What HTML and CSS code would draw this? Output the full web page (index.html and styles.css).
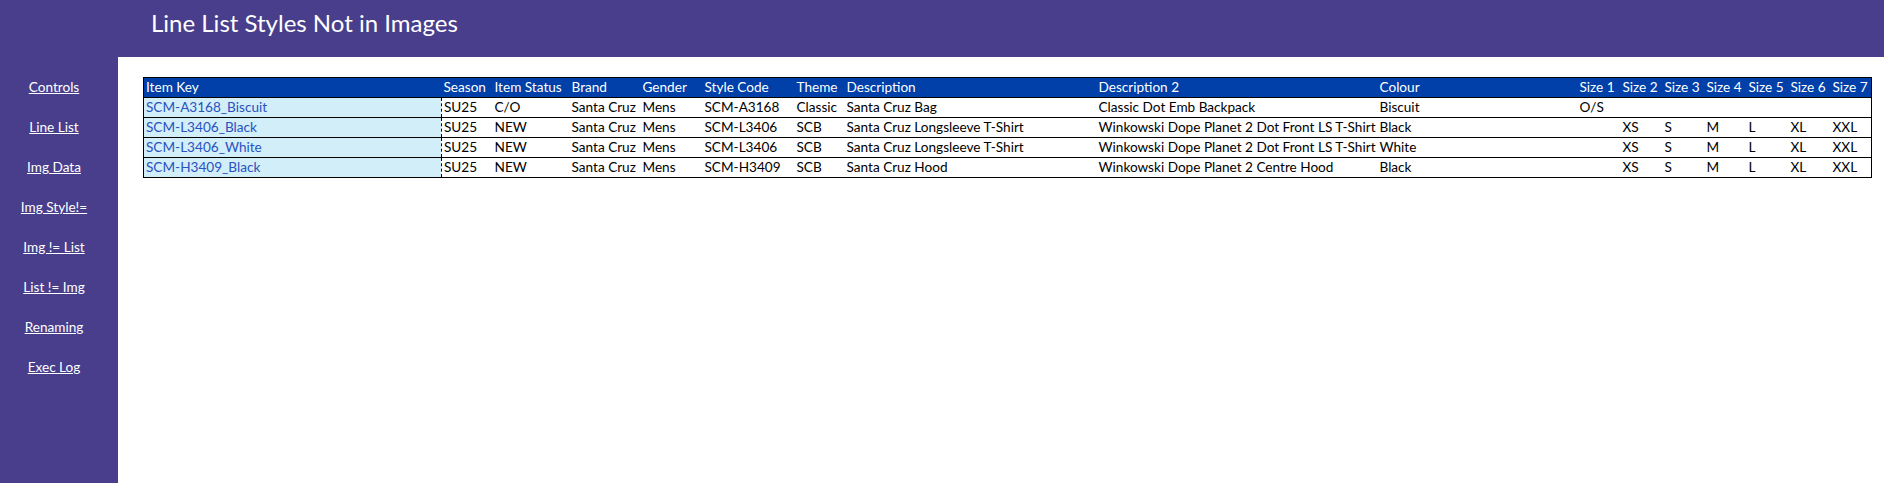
FILE: index.html
```html
<!DOCTYPE html>
<html lang="en">
<head>
<meta charset="utf-8">
<title>Line List Styles Not in Images</title>
<link rel="stylesheet" href="styles.css">
</head>
<body>
<header class="topbar">
  <h1 class="title">Line List Styles Not in Images</h1>
</header>
<div class="main">
  <nav class="sidebar">
    <a class="navlink" href="#">Controls</a>
    <a class="navlink" href="#">Line List</a>
    <a class="navlink" href="#">Img Data</a>
    <a class="navlink" href="#">Img Style!=</a>
    <a class="navlink" href="#">Img != List</a>
    <a class="navlink" href="#">List != Img</a>
    <a class="navlink" href="#">Renaming</a>
    <a class="navlink" href="#">Exec Log</a>
  </nav>
  <section class="content">
    <table class="grid">
      <colgroup>
        <col class="c-key"><col class="c-season"><col class="c-status"><col class="c-brand"><col class="c-gender"><col class="c-style"><col class="c-theme"><col class="c-desc"><col class="c-desc2"><col class="c-colour"><col class="c-s1"><col class="c-s"><col class="c-s"><col class="c-s"><col class="c-s"><col class="c-s"><col class="c-s7">
      </colgroup>
      <thead>
        <tr>
          <th>Item Key</th><th>Season</th><th>Item Status</th><th>Brand</th><th>Gender</th><th>Style Code</th><th>Theme</th><th>Description</th><th>Description 2</th><th>Colour</th><th>Size 1</th><th>Size 2</th><th>Size 3</th><th>Size 4</th><th>Size 5</th><th>Size 6</th><th>Size 7</th>
        </tr>
      </thead>
      <tbody>
        <tr>
          <td class="key">SCM-A3168_Biscuit</td><td>SU25</td><td>C/O</td><td>Santa Cruz</td><td>Mens</td><td>SCM-A3168</td><td>Classic</td><td>Santa Cruz Bag</td><td>Classic Dot Emb Backpack</td><td>Biscuit</td><td>O/S</td><td></td><td></td><td></td><td></td><td></td><td></td>
        </tr>
        <tr>
          <td class="key">SCM-L3406_Black</td><td>SU25</td><td>NEW</td><td>Santa Cruz</td><td>Mens</td><td>SCM-L3406</td><td>SCB</td><td>Santa Cruz Longsleeve T-Shirt</td><td>Winkowski Dope Planet 2 Dot Front LS T-Shirt</td><td>Black</td><td></td><td>XS</td><td>S</td><td>M</td><td>L</td><td>XL</td><td>XXL</td>
        </tr>
        <tr>
          <td class="key">SCM-L3406_White</td><td>SU25</td><td>NEW</td><td>Santa Cruz</td><td>Mens</td><td>SCM-L3406</td><td>SCB</td><td>Santa Cruz Longsleeve T-Shirt</td><td>Winkowski Dope Planet 2 Dot Front LS T-Shirt</td><td>White</td><td></td><td>XS</td><td>S</td><td>M</td><td>L</td><td>XL</td><td>XXL</td>
        </tr>
        <tr>
          <td class="key">SCM-H3409_Black</td><td>SU25</td><td>NEW</td><td>Santa Cruz</td><td>Mens</td><td>SCM-H3409</td><td>SCB</td><td>Santa Cruz Hood</td><td>Winkowski Dope Planet 2 Centre Hood</td><td>Black</td><td></td><td>XS</td><td>S</td><td>M</td><td>L</td><td>XL</td><td>XXL</td>
        </tr>
      </tbody>
    </table>
  </section>
</div>
</body>
</html>
```

FILE: styles.css
```css
html, body {
  margin: 0;
  padding: 0;
  height: 100%;
}

body {
  font-family: Lato, "Open Sans", "DejaVu Sans", sans-serif;
  font-size: 13.6px;
  background: #ffffff;
  display: flex;
  flex-direction: column;
  overflow: hidden;
}

.topbar {
  height: 57px;
  background: #483e8c;
  flex: none;
}

.title {
  margin: 0;
  padding: 7px 0 0 151px;
  font-weight: normal;
  font-size: 24px;
  line-height: 32px;
  color: #ffffff;
}

.main {
  flex: 1;
  display: flex;
}

.sidebar {
  width: 108px;
  padding: 20px 10px 0 0;
  background: #483e8c;
  display: flex;
  flex-direction: column;
  align-items: center;
  gap: 20px;
}

.navlink {
  color: #ffffff;
  text-decoration: underline;
  line-height: 20px;
}

.content {
  flex: 1;
  padding: 20px 0 0 25px;
}

.grid {
  border-collapse: collapse;
  table-layout: fixed;
  width: 1728px;
  border: 1px solid #000;
}

.grid th,
.grid td {
  padding: 0 0 0 2px;
  height: 19px;
  line-height: 19px;
  text-align: left;
  white-space: nowrap;
  overflow: hidden;
  font-weight: normal;
}

.grid th {
  background: #0040a8;
  color: #ffffff;
  border-bottom: 1px solid #000;
}

.grid td {
  color: #000;
  border-bottom: 1px solid #000;
}

.grid td.key {
  background: #d2eef9;
  color: #2a52be;
  border-right: 1px dashed #000;
}

.c-key { width: 298px; }
.c-season { width: 51px; }
.c-status { width: 77px; }
.c-brand { width: 71px; }
.c-gender { width: 62px; }
.c-style { width: 92px; }
.c-theme { width: 50px; }
.c-desc { width: 252px; }
.c-desc2 { width: 281px; }
.c-colour { width: 200px; }
.c-s1 { width: 43px; }
.c-s { width: 42px; }
.c-s7 { width: 41px; }
```
